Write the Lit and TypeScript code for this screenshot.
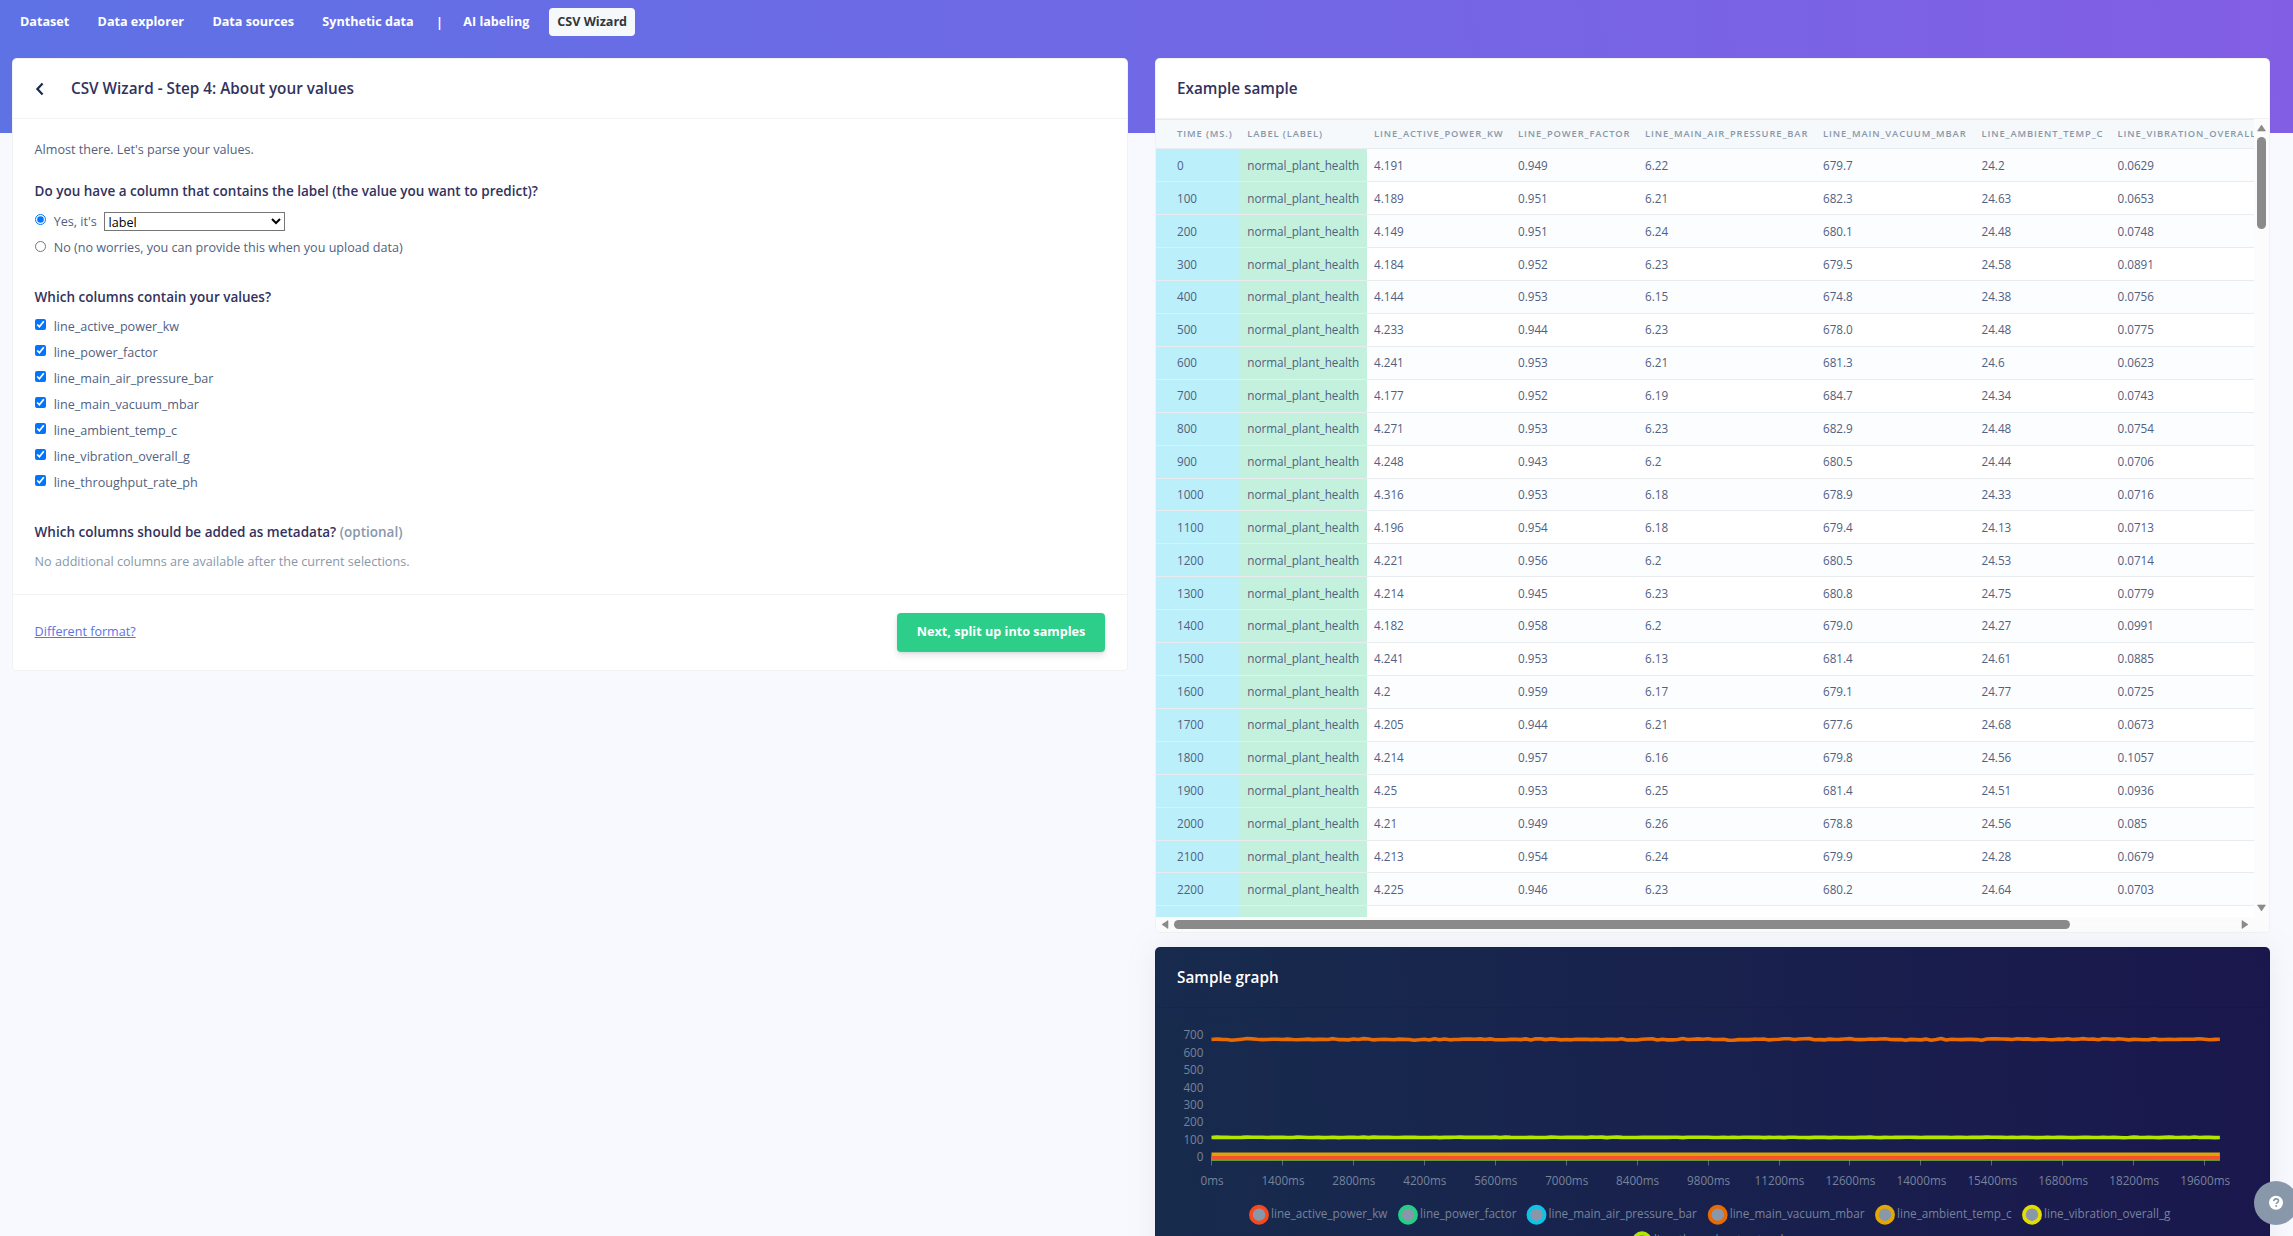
import { LitElement, html, svg, css } from "lit";
import { customElement, state } from "lit/decorators.js";

const COLUMNS = [
  "line_active_power_kw",
  "line_power_factor",
  "line_main_air_pressure_bar",
  "line_main_vacuum_mbar",
  "line_ambient_temp_c",
  "line_vibration_overall_g",
  "line_throughput_rate_ph",
];

const ROWS: string[][] = [
  ["4.191", "0.949", "6.22", "679.7", "24.2", "0.0629"],
  ["4.189", "0.951", "6.21", "682.3", "24.63", "0.0653"],
  ["4.149", "0.951", "6.24", "680.1", "24.48", "0.0748"],
  ["4.184", "0.952", "6.23", "679.5", "24.58", "0.0891"],
  ["4.144", "0.953", "6.15", "674.8", "24.38", "0.0756"],
  ["4.233", "0.944", "6.23", "678.0", "24.48", "0.0775"],
  ["4.241", "0.953", "6.21", "681.3", "24.6", "0.0623"],
  ["4.177", "0.952", "6.19", "684.7", "24.34", "0.0743"],
  ["4.271", "0.953", "6.23", "682.9", "24.48", "0.0754"],
  ["4.248", "0.943", "6.2", "680.5", "24.44", "0.0706"],
  ["4.316", "0.953", "6.18", "678.9", "24.33", "0.0716"],
  ["4.196", "0.954", "6.18", "679.4", "24.13", "0.0713"],
  ["4.221", "0.956", "6.2", "680.5", "24.53", "0.0714"],
  ["4.214", "0.945", "6.23", "680.8", "24.75", "0.0779"],
  ["4.182", "0.958", "6.2", "679.0", "24.27", "0.0991"],
  ["4.241", "0.953", "6.13", "681.4", "24.61", "0.0885"],
  ["4.2", "0.959", "6.17", "679.1", "24.77", "0.0725"],
  ["4.205", "0.944", "6.21", "677.6", "24.68", "0.0673"],
  ["4.214", "0.957", "6.16", "679.8", "24.56", "0.1057"],
  ["4.25", "0.953", "6.25", "681.4", "24.51", "0.0936"],
  ["4.21", "0.949", "6.26", "678.8", "24.56", "0.085"],
  ["4.213", "0.954", "6.24", "679.9", "24.28", "0.0679"],
  ["4.225", "0.946", "6.23", "680.2", "24.64", "0.0703"],
];

const POINTS = 200;
const X0 = 55.5;
const STEP = 70.94 / 14;
const Y0 = 158.6;
const SCALE = 0.1753;

/* Deterministic noise, so every render draws the same samples. */
function series(base: number, spread: number, seed: number, head: number[] = []): string {
  let s = seed;
  const out: string[] = [];
  for (let i = 0; i < POINTS; i++) {
    s = (s * 1103515245 + 12345) % 2147483648;
    const a = s / 2147483648;
    s = (s * 1103515245 + 12345) % 2147483648;
    const b = s / 2147483648;
    const v = i < head.length ? head[i] : base + (a + b - 1) * spread;
    out.push(`${(X0 + i * STEP).toFixed(1)},${(Y0 - v * SCALE).toFixed(2)}`);
  }
  return out.join(" ");
}

const col = (i: number) => ROWS.map((r) => parseFloat(r[i]));

const LINES = [
  { color: "#b2e600", points: series(121, 2, 91) },
  { color: "#e0e000", points: series(0.07, 0.03, 5, col(5)) },
  { color: "#dea408", points: series(24.5, 0.5, 17, col(4)) },
  { color: "#e76a04", points: series(680, 5.5, 29, col(3)) },
  { color: "#11cdef", points: series(6.2, 0.1, 3, col(2)) },
  { color: "#2dce89", points: series(0.95, 0.01, 7, col(1)) },
  { color: "#f5532b", points: series(4.2, 0.1, 13, col(0)) },
];

const LEGEND = [
  { color: "#f8481c", x: 103, y: 214.7, name: COLUMNS[0] },
  { color: "#23cf85", x: 252, y: 214.7, name: COLUMNS[1] },
  { color: "#08c6ea", x: 380.5, y: 214.7, name: COLUMNS[2] },
  { color: "#e76a04", x: 561.7, y: 214.7, name: COLUMNS[3] },
  { color: "#e6a800", x: 729, y: 214.7, name: COLUMNS[4] },
  { color: "#e2de00", x: 876, y: 214.7, name: COLUMNS[5] },
  { color: "#b2e600", x: 486, y: 241.2, name: COLUMNS[6] },
];

@customElement("sample-graph")
export class SampleGraph extends LitElement {
  static styles = css`
    :host {
      display: block;
    }
    svg {
      display: block;
    }
    text {
      font: 11.7px "Open Sans", sans-serif;
      fill: #76839b;
    }
    .line {
      fill: none;
      stroke-width: 3.6;
      stroke-linejoin: round;
    }
    .tick {
      stroke: #5a6680;
    }
  `;

  render() {
    return html`<svg width="1113" height="260" viewBox="0 8 1113 260">
      ${[0, 1, 2, 3, 4, 5, 6, 7].map(
        (n) => svg`<text x="47.5" y=${161.4 - n * 17.47} text-anchor="end">${n * 100}</text>`
      )}
      ${Array.from({ length: 15 }, (_, i) => {
        const x = 56 + i * 70.94;
        return svg`<line class="tick" x1=${Math.round(x) - 0.5} x2=${Math.round(x) - 0.5} y1="160" y2="165.5"></line>
          <text x=${x} y="185" text-anchor="middle">${i * 1400}ms</text>`;
      })}
      ${LINES.map((l) => svg`<polyline class="line" stroke=${l.color} points=${l.points}></polyline>`)}
      ${LEGEND.map(
        (l) => svg`<circle cx=${l.x} cy=${l.y} r="8.1" fill="#8898aa" stroke=${l.color} stroke-width="3.7"></circle>
          <text x=${l.x + 12} y=${l.y + 3.1}>${l.name}</text>`
      )}
    </svg>`;
  }
}

@customElement("app-root")
export class AppRoot extends LitElement {
  @state() private hasLabel = true;

  static styles = css`
    :host {
      display: block;
      position: relative;
      width: 100%;
      height: 1236px;
      overflow: hidden;
      background: #f8f9fe;
      font: 12.6px/19px "Open Sans", sans-serif;
      color: #525f7f;
    }
    * {
      box-sizing: border-box;
    }
    .page {
      height: 1236px;
      background: linear-gradient(87deg, #5e72e4 0, #825ee4 100%) no-repeat 0 0 / 100% 133px;
    }
    .nav {
      display: flex;
      align-items: center;
      height: 58px;
      padding: 0 0 14px 12px;
      color: #fff;
      font-weight: 700;
    }
    .nav a {
      padding: 4px 8px 5px;
      margin-right: 12.4px;
      white-space: nowrap;
    }
    .nav .bar {
      margin: 0 12.3px 0 2px;
    }
    .nav .active {
      height: 28px;
      margin-left: -0.5px;
      border-radius: 4px;
      background: #f6f9fc;
      color: #32363a;
    }
    .cols {
      display: grid;
      grid-template-columns: 1116px 1115px;
      column-gap: 27px;
      padding-left: 12px;
      align-items: start;
    }
    .card {
      background: #fff;
      border: 1px solid rgba(0, 0, 0, 0.05);
      border-radius: 5px;
    }
    .head {
      display: flex;
      align-items: center;
      height: 60px;
      padding: 0 21px;
      border-bottom: 1px solid rgba(0, 0, 0, 0.05);
      color: #32325d;
      font-size: 15.3px;
      font-weight: 600;
    }
    .back {
      width: 12px;
      height: 14px;
      margin: 0 25.5px 0 -0.5px;
    }
    .body {
      height: 475px;
      padding: 21px 21.6px 0;
    }
    p {
      margin: 0;
    }
    h4 {
      margin: 0;
      color: #32325d;
      font-size: 13.5px;
      font-weight: 600;
      line-height: 20px;
    }
    .intro {
      margin-bottom: 22px;
    }
    .opts {
      margin: 7px 0 27px;
    }
    .opt {
      display: flex;
      align-items: center;
      height: 26px;
    }
    .opt input {
      width: 11.7px;
      height: 11.7px;
      margin: 0 7.4px 3px 0;
    }
    .opts .opt + .opt input {
      margin-bottom: 1px;
    }
    .vals {
      margin: 6px 0 27px;
    }
    select {
      width: 181px;
      height: 19px;
      margin-left: 6.8px;
      padding: 0;
      border: 1px solid #767676;
      border-radius: 0;
      background: #fff;
      color: #000;
      font: 12.6px/17px "Open Sans", sans-serif;
    }
    .muted {
      color: #8898aa;
    }
    .note {
      margin-top: 10px;
    }
    .foot {
      display: flex;
      align-items: center;
      justify-content: space-between;
      height: 76px;
      padding: 0 22px 0 21.6px;
      border-top: 1px solid rgba(0, 0, 0, 0.05);
    }
    .foot a {
      color: #5e72e4;
      text-decoration: underline;
      padding-bottom: 2px;
    }
    .next {
      width: 208px;
      height: 39px;
      border: 0;
      border-radius: 4px;
      background: #2dce89;
      color: #fff;
      font: 700 12.6px "Open Sans", sans-serif;
      letter-spacing: 0.03px;
      padding: 0 0 2px;
      box-shadow: 0 4px 6px rgba(50, 50, 93, 0.11), 0 1px 3px rgba(0, 0, 0, 0.08);
    }
    .right {
      display: grid;
      row-gap: 14px;
    }
    .sample {
      height: 875px;
      overflow: hidden;
    }
    .scroller {
      display: grid;
      grid-template: 798px 15px / 1098px 15px;
      background: #fcfcfc;
    }
    .view {
      overflow: hidden;
      background: #fff;
    }
    table,
    thead,
    tbody {
      display: block;
    }
    tr {
      display: grid;
      grid-template-columns: 84.3px 126.7px 144px 127px 178px 158.5px 136px 286px;
      width: 1240.5px;
      height: 32.92px;
    }
    thead tr {
      height: 29.48px;
    }
    th,
    td {
      padding: 7.2px 7px 0;
      border-top: 1px solid #e9ecef;
      text-align: left;
      white-space: nowrap;
    }
    th {
      background: #f6f9fc;
      color: #8898aa;
      font-size: 9.36px;
      font-weight: 600;
      letter-spacing: 0.9px;
      line-height: 14px;
      text-transform: uppercase;
    }
    td {
      padding-top: 7.33px;
      font-size: 11.7px;
      line-height: 17px;
    }
    tbody tr:nth-child(odd) td {
      background: #fbfdff;
    }
    th:first-child,
    td:first-child {
      padding-left: 21px;
    }
    tbody tr td.time {
      background: #bbf0fb;
    }
    tbody tr td.label {
      background: #c4f1de;
    }
    .sb {
      display: block;
    }
    .dark {
      height: 360px;
      border-radius: 5px;
      border: 1px solid rgba(0, 0, 0, 0.05);
      background: linear-gradient(87deg, #172b4d 0, #1a174d 100%) border-box;
      box-shadow: 0 0 29px rgba(136, 152, 170, 0.15);
    }
    .dark .head {
      color: #fff;
    }
    .help {
      position: absolute;
      left: 2254px;
      top: 1181px;
      width: 44px;
      height: 44px;
    }
  `;

  private renderNav() {
    return html`<nav class="nav">
      <a>Dataset</a><a>Data explorer</a><a>Data sources</a><a>Synthetic data</a>
      <span class="bar">|</span><a>AI labeling</a><a class="active">CSV Wizard</a>
    </nav>`;
  }

  private renderForm() {
    return html`<section class="card">
      <div class="head">
        <svg class="back" viewBox="0 0 12 14"><path d="M8.6 1.6 3.4 7l5.2 5.4" fill="none" stroke="#172b4d" stroke-width="2.2"></path></svg>
        CSV Wizard - Step 4: About your values
      </div>
      <div class="body">
        <p class="intro">Almost there. Let's parse your values.</p>
        <h4>Do you have a column that contains the label (the value you want to predict)?</h4>
        <div class="opts">
          <label class="opt">
            <input type="radio" name="has" .checked=${this.hasLabel} @change=${() => (this.hasLabel = true)} />Yes, it's
            <select><option>label</option></select>
          </label>
          <label class="opt">
            <input type="radio" name="has" .checked=${!this.hasLabel} @change=${() => (this.hasLabel = false)} />No (no
            worries, you can provide this when you upload data)
          </label>
        </div>
        <h4>Which columns contain your values?</h4>
        <div class="vals">
          ${COLUMNS.map((c) => html`<label class="opt"><input type="checkbox" checked />${c}</label>`)}
        </div>
        <h4>Which columns should be added as metadata? <span class="muted">(optional)</span></h4>
        <p class="note muted">No additional columns are available after the current selections.</p>
      </div>
      <div class="foot">
        <a>Different format?</a>
        <button class="next">Next, split up into samples</button>
      </div>
    </section>`;
  }

  private renderTable() {
    return html`<section class="card sample">
      <div class="head">Example sample</div>
      <div class="scroller">
        <div class="view">
          <table>
            <thead>
              <tr>
                <th>Time (ms.)</th>
                <th>label (label)</th>
                ${COLUMNS.slice(0, 6).map((c) => html`<th>${c}</th>`)}
              </tr>
            </thead>
            <tbody>
              ${ROWS.map(
                (r, i) => html`<tr>
                  <td class="time">${i * 100}</td>
                  <td class="label">normal_plant_health</td>
                  ${r.map((v) => html`<td>${v}</td>`)}
                </tr>`
              )}
              <tr>
                <td class="time"></td>
                <td class="label"></td>
                ${COLUMNS.slice(0, 6).map(() => html`<td></td>`)}
              </tr>
            </tbody>
          </table>
        </div>
        <svg class="sb" width="15" height="798">
          <path d="M3.5 12 7.5 6l4 6z M3.5 786h8l-4 6z" fill="#8b8b8b" stroke="#8b8b8b" stroke-linejoin="round" stroke-width=".6"></path>
          <rect x="3" y="18" width="9" height="92" rx="4.5" fill="#8b8b8b"></rect>
        </svg>
        <svg class="sb" width="1098" height="15">
          <path d="M12 3.5v8l-6-4z M1086 3.5v8l6-4z" fill="#8b8b8b" stroke="#8b8b8b" stroke-linejoin="round" stroke-width=".6"></path>
          <rect x="18" y="3" width="896" height="9" rx="4.5" fill="#8b8b8b"></rect>
        </svg>
      </div>
    </section>`;
  }

  render() {
    return html`<div class="page">
        ${this.renderNav()}
        <main class="cols">
          ${this.renderForm()}
          <div class="right">
            ${this.renderTable()}
            <section class="dark">
              <div class="head">Sample graph</div>
              <sample-graph></sample-graph>
            </section>
          </div>
        </main>
      </div>
      <svg class="help" viewBox="0 0 44 44">
        <circle cx="22" cy="22" r="22" fill="#8898aa"></circle>
        <circle cx="22" cy="21.7" r="7" fill="#fff"></circle>
        <path d="M19.7 20.1c.2-1.5 1.1-2.2 2.4-2.2 1.4 0 2.4.8 2.4 2 0 1.7-2.3 1.7-2.3 3.2" fill="none" stroke="#8898aa" stroke-width="1.6"></path>
        <circle cx="22.2" cy="25.1" r="1" fill="#8898aa"></circle>
      </svg>`;
  }
}
